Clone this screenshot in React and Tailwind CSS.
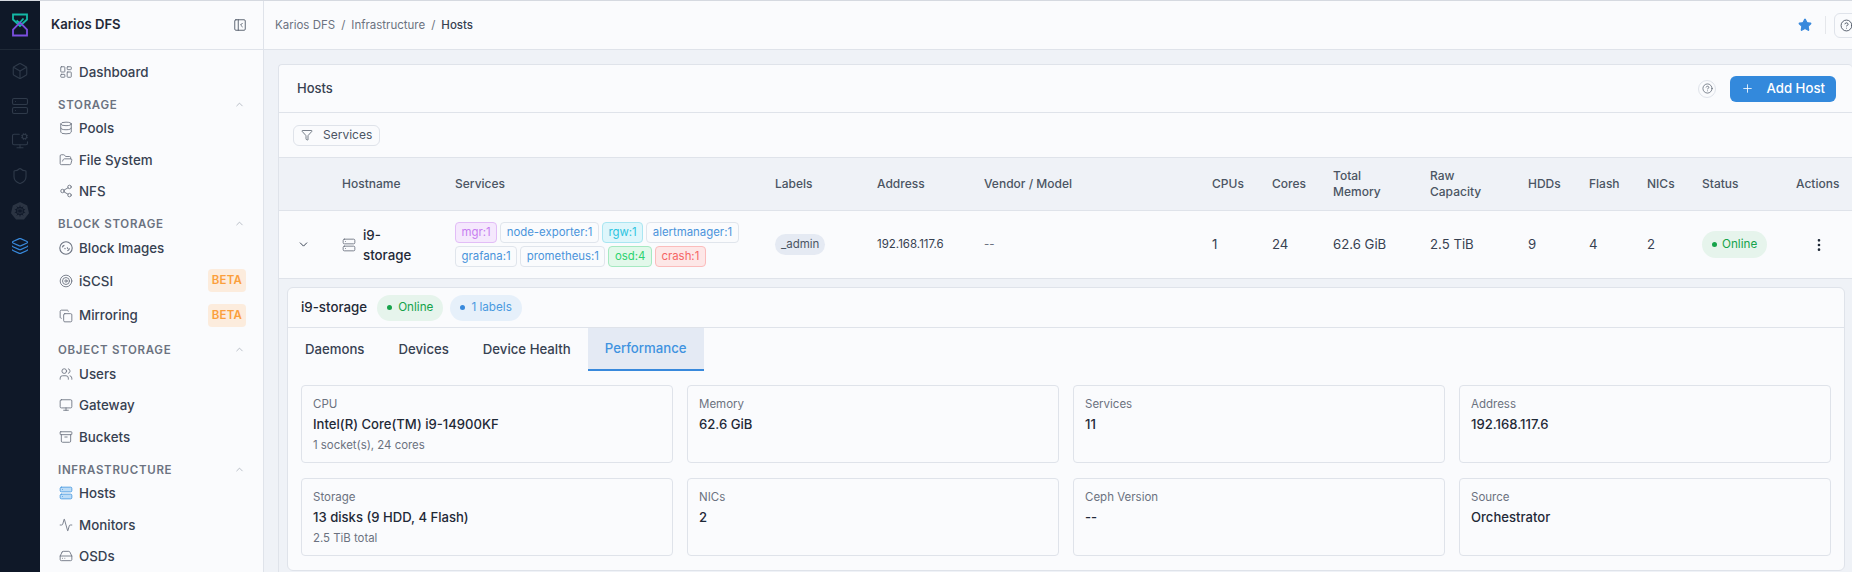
import React from 'react';
import {
  LayoutDashboard, Database, FolderOpen, Share2, Target, Copy, Users, Monitor, Archive, Server,
  Activity, HardDrive, Box, MonitorCog, Shield, Layers, PanelLeftClose, Star, CircleHelp, Funnel,
  Plus, EllipsisVertical, ChevronUp, ChevronDown,
} from 'lucide-react';

const Logo = () => (
  <svg width="18" height="24" viewBox="0 0 18 24" fill="none" strokeWidth="1.8">
    <path d="M2 1.5H16V6.5L9 13 2 6.5Z" stroke="#14b8a6" />
    <path d="M5.5 7.5 8.5 10 12.5 5.5" stroke="#14b8a6" />
    <path d="M9 9.5 16 16.5V22.5H2V16.5L9 9.5Z" stroke="#7c4fe0" />
  </svg>
);

const KubeIcon = () => (
  <svg width="18" height="18" viewBox="0 0 18 18" fill="none">
    <path d="M9 0 16.2 3.4 18 11.2 13 17.5H5L0 11.2 1.8 3.4Z" fill="#2b3443" />
    <circle cx="9" cy="9" r="3.8" stroke="#0f1828" strokeWidth="1" />
    <path d="M9 3.5V14.5M3.8 7.3 14.2 10.7M14.2 7.3 3.8 10.7M5.8 4.5 12.2 13.5M12.2 4.5 5.8 13.5" stroke="#0f1828" strokeWidth="0.8" />
  </svg>
);

const DiskIcon = ({ size = 14 }) => (
  <svg width={size} height={size} viewBox="0 0 14 14" fill="none" stroke="currentColor" strokeWidth="1.1">
    <circle cx="7" cy="7" r="6.2" />
    <path d="M3.4 6.4a2.4 2.4 0 0 1 2-2M5.6 7.2l.8.8M8.2 6.4l.6 1.4M10.4 7.2a3 3 0 0 1-2 2.6" />
  </svg>
);

const Beta = () => (
  <span className="flex h-[23px] w-[38px] items-center justify-center rounded-[4px] bg-[#fcecdd] text-[11.5px] font-semibold tracking-[0.2px] text-[#fb9f3c]">
    BETA
  </span>
);

const NavItem = ({ icon: Icon, label, badge, active, h = 'h-[31.5px]' }) => (
  <div className={`flex items-center pl-[19px] pr-[17px] ${h}`}>
    <span className={`flex w-[20px] shrink-0 ${active ? 'text-[#4a9ae0]' : 'text-[#6b7280]'}`}>
      <Icon size={14} strokeWidth={1.5} fill={active ? '#bcdcf7' : 'none'} />
    </span>
    <span className="flex-1 text-[13.35px] font-medium text-[#374151]">{label}</span>
    {badge && <Beta />}
  </div>
);

const NavLabel = ({ children }) => (
  <div className="flex h-[25px] items-end justify-between pl-[18px] pr-[18px]">
    <span className="text-[11.5px] leading-[15px] font-semibold tracking-[0.7px] text-[#6b7280]">{children}</span>
    <ChevronUp size={11} strokeWidth={1.5} className="mb-[3px] text-[#9ca3af]" />
  </div>
);

const Chip = ({ children, cls = 'border-[#e0e5ec] text-[#4a94db]' }) => (
  <span className={`flex h-[21px] items-center rounded-[4px] border px-[5.5px] text-[11.4px] ${cls}`}>{children}</span>
);

const Pill = ({ children, cls, dot }) => (
  <span className={`flex h-[26px] items-center gap-[6px] rounded-full px-[10px] text-[11.7px] ${cls}`}>
    <span className={`size-[5px] rounded-full ${dot}`} />
    {children}
  </span>
);

const InfoCard = ({ label, value, sub }) => (
  <div className="h-[78px] rounded-[4px] border border-[#dfe3ea] px-[11px] pt-[9px]">
    <div className="text-[11.5px] leading-[18px] text-[#6b7280]">{label}</div>
    <div className="text-[13.1px] leading-[22px] font-medium text-[#1f2937]">{value}</div>
    {sub && <div className="text-[11.4px] leading-[20px] text-[#6b7280]">{sub}</div>}
  </div>
);

const columns = 'grid-cols-[63px_113px_320px_102px_107px_228px_60px_61px_97px_98px_61px_58px_55px_94px_1fr]';

export default function App() {
  return (
    <div className="flex h-[572px] w-[1852px] overflow-hidden border-t border-[#d5d9e0] bg-[#eff2f7] font-[Inter,sans-serif] text-[13.2px]">
      {/* Dark rail */}
      <div className="flex w-[40px] shrink-0 flex-col items-center bg-[#0f1828]">
        <div className="flex h-[49px] w-full items-center justify-center border-b border-[#1f2937]">
          <Logo />
        </div>
        <div className="flex flex-col items-center gap-[17px] pt-[12px] text-[#2f3a4a]">
          <Box size={18} strokeWidth={1.5} />
          <Server size={18} strokeWidth={1.5} />
          <MonitorCog size={18} strokeWidth={1.5} />
          <Shield size={18} strokeWidth={1.5} />
          <KubeIcon />
          <Layers size={18} strokeWidth={1.5} className="text-[#3889dc]" />
        </div>
      </div>

      {/* Sidebar */}
      <div className="w-[224px] shrink-0 border-r border-[#dfe3ea] bg-[#fafbfd]">
        <div className="flex h-[49px] items-center justify-between border-b border-[#dfe3ea] pl-[11px] pr-[16px]">
          <span className="text-[13.1px] font-semibold text-[#1f2937]">Karios DFS</span>
          <PanelLeftClose size={14} strokeWidth={1.5} className="text-[#4b5563]" />
        </div>
        <div className="pt-[6px]">
          <NavItem icon={LayoutDashboard} label="Dashboard" />
          <NavLabel>STORAGE</NavLabel>
          <NavItem icon={Database} label="Pools" />
          <NavItem icon={FolderOpen} label="File System" />
          <NavItem icon={Share2} label="NFS" />
          <NavLabel>BLOCK STORAGE</NavLabel>
          <NavItem icon={DiskIcon} label="Block Images" />
          <NavItem icon={Target} label="iSCSI" badge h="h-[34.5px]" />
          <NavItem icon={Copy} label="Mirroring" badge h="h-[35px]" />
          <NavLabel>OBJECT STORAGE</NavLabel>
          <NavItem icon={Users} label="Users" />
          <NavItem icon={Monitor} label="Gateway" />
          <NavItem icon={Archive} label="Buckets" />
          <NavLabel>INFRASTRUCTURE</NavLabel>
          <NavItem icon={Server} label="Hosts" active />
          <NavItem icon={Activity} label="Monitors" />
          <NavItem icon={HardDrive} label="OSDs" />
        </div>
      </div>

      {/* Main */}
      <div className="min-w-0 flex-1">
        <div className="flex h-[49px] items-center justify-between border-b border-[#dfe3ea] bg-[#fafbfd] pl-[11px]">
          <div className="flex items-center gap-[6px] pt-[2px] text-[11.5px] text-[#6b7280]">
            <span>Karios DFS</span>
            <span>/</span>
            <span>Infrastructure</span>
            <span>/</span>
            <span className="font-medium text-[#374151]">Hosts</span>
          </div>
          <div className="flex items-center">
            <Star size={14} fill="#3889dc" className="text-[#3889dc]" />
            <span className="ml-[13px] mr-[8px] h-[18px] w-px bg-[#e5e7eb]" />
            <span className="flex h-[25px] w-[30px] -mr-[12px] items-center justify-start rounded-[6px] border border-[#dfe3ea] pl-[5px]">
              <CircleHelp size={13} strokeWidth={1.5} className="text-[#374151]" />
            </span>
          </div>
        </div>

        <div className="ml-[14px] mt-[14px] w-[1574px] rounded-t-[4px] border-l border-t border-[#dfe3ea] bg-[#fafbfd]">
          <div className="flex h-[48px] items-center border-b border-[#dfe3ea] pl-[18px] pr-[16px]">
            <span className="flex-1 text-[13px] font-medium text-[#374151]">Hosts</span>
            <span className="mr-[14px] flex size-[18px] items-center justify-center rounded-full border border-[#dfe3ea]">
              <CircleHelp size={11} strokeWidth={1.5} className="text-[#4b5563]" />
            </span>
            <button className="flex h-[26px] w-[106px] items-center justify-between rounded-[6px] bg-[#3389dc] pl-[11px] pr-[11px] text-[13.2px] font-medium text-white">
              <Plus size={13} strokeWidth={1.5} />
              Add Host
            </button>
          </div>

          <div className="flex h-[45px] items-center border-b border-[#dfe3ea] pl-[14px]">
            <span className="flex h-[21px] items-center gap-[10px] rounded-[6px] border border-[#dfe3ea] pl-[7px] pr-[7px] text-[12px] text-[#4b5563]">
              <Funnel size={12} strokeWidth={1.5} />
              Services
            </span>
          </div>

          <div className={`grid h-[53px] items-center border-b border-[#dfe3ea] bg-[#eff2f7] text-[12px] leading-[16px] font-medium text-[#4b5563] ${columns}`}>
            <span />
            <span>Hostname</span>
            <span>Services</span>
            <span>Labels</span>
            <span>Address</span>
            <span>Vendor / Model</span>
            <span>CPUs</span>
            <span>Cores</span>
            <span>Total<br />Memory</span>
            <span>Raw<br />Capacity</span>
            <span>HDDs</span>
            <span>Flash</span>
            <span>NICs</span>
            <span>Status</span>
            <span>Actions</span>
          </div>

          <div className={`grid h-[68px] items-center border-b border-[#dfe3ea] text-[#374151] ${columns}`}>
            <span className="flex pl-[18px] text-[#374151]"><ChevronDown size={13} strokeWidth={1.8} /></span>
            <span className="flex items-center gap-[7px]">
              <Server size={14} strokeWidth={1.5} className="text-[#6b7280]" />
              <span className="text-[13.3px] leading-[20px] font-medium text-[#1f2937]">i9-<br />storage</span>
            </span>
            <div className="flex w-[300px] flex-wrap gap-x-[3px] gap-y-[3px]">
              <Chip cls="border-[#e2bdf7] bg-[#f5e8fd] text-[#c77df0]">mgr:1</Chip>
              <Chip>node-exporter:1</Chip>
              <Chip cls="border-[#a9e6f2] bg-[#def6fb] text-[#2cc4e0]">rgw:1</Chip>
              <Chip>alertmanager:1</Chip>
              <Chip>grafana:1</Chip>
              <Chip>prometheus:1</Chip>
              <Chip cls="border-[#a6e9c1] bg-[#e2f8ea] text-[#2dd36f]">osd:4</Chip>
              <Chip cls="border-[#fbbcbc] bg-[#fde7e7] text-[#f56565]">crash:1</Chip>
            </div>
            <span className="flex">
              <span className="flex h-[21px] items-center rounded-full bg-[#e5eaf3] px-[6px] text-[11.5px] text-[#4b5563]">_admin</span>
            </span>
            <span className="text-[11.5px]">192.168.117.6</span>
            <span className="text-[11.5px] text-[#6b7280]">--</span>
            <span>1</span>
            <span>24</span>
            <span>62.6 GiB</span>
            <span>2.5 TiB</span>
            <span>9</span>
            <span>4</span>
            <span>2</span>
            <span className="flex w-[66px]">
              <span className="flex h-[27px] items-center gap-[5px] rounded-full bg-[#e6f4ec] px-[10px] text-[11.7px] text-[#16a34a]">
                <span className="size-[5px] rounded-full bg-[#16a34a]" />
                Online
              </span>
            </span>
            <span className="flex pl-[15px]"><EllipsisVertical size={16} strokeWidth={2} className="text-[#1f2937]" /></span>
          </div>

          {/* Expanded row */}
          <div className="h-[300px] bg-[#eff2f7] pl-[8px] pt-[8px]">
            <div className="w-[1558px] rounded-[6px] border border-[#dfe3ea] bg-[#fafbfd] pb-[14px]">
              <div className="flex h-[40px] items-center gap-[7px] border-b border-[#dfe3ea] pl-[13px]">
                <span className="mr-[3px] text-[13.3px] font-medium text-[#1f2937]">i9-storage</span>
                <Pill cls="bg-[#e6f4ec] text-[#16a34a]" dot="bg-[#16a34a]">Online</Pill>
                <Pill cls="bg-[#e6f0fa] text-[#4a9ae0]" dot="bg-[#3889dc]">1 labels</Pill>
              </div>
              <div className="flex h-[43px] text-[13.2px] font-medium text-[#374151]">
                <span className="flex items-center px-[17px]">Daemons</span>
                <span className="flex items-center px-[17px]">Devices</span>
                <span className="flex items-center px-[17px]">Device Health</span>
                <span className="flex items-center border-b-2 border-[#3889dc] bg-[#e4eaf4] px-[17px] text-[#3f93e0]">Performance</span>
              </div>
              <div className="grid grid-cols-4 gap-x-[14px] gap-y-[15px] px-[13px] pt-[14px]">
                <InfoCard label="CPU" value="Intel(R) Core(TM) i9-14900KF" sub="1 socket(s), 24 cores" />
                <InfoCard label="Memory" value="62.6 GiB" />
                <InfoCard label="Services" value="11" />
                <InfoCard label="Address" value="192.168.117.6" />
                <InfoCard label="Storage" value="13 disks (9 HDD, 4 Flash)" sub="2.5 TiB total" />
                <InfoCard label="NICs" value="2" />
                <InfoCard label="Ceph Version" value="--" />
                <InfoCard label="Source" value="Orchestrator" />
              </div>
            </div>
          </div>
        </div>
      </div>
    </div>
  );
}
